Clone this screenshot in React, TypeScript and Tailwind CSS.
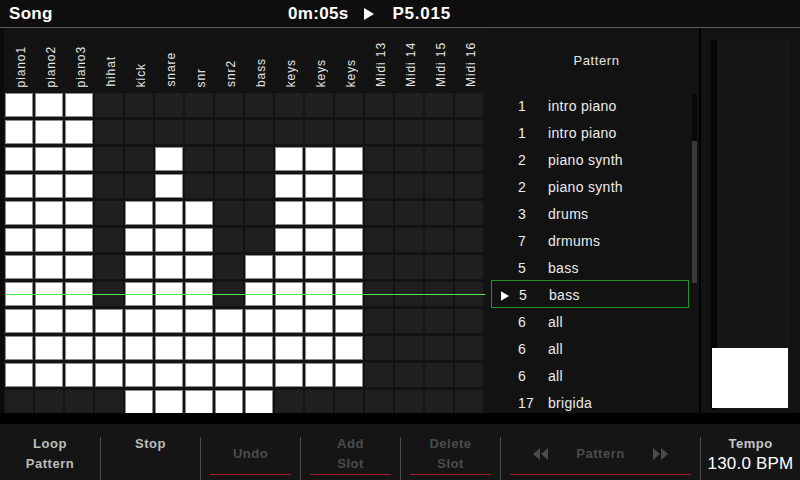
import React from 'react';

const COLUMNS = [
  'piano1', 'piano2', 'piano3', 'hihat', 'kick', 'snare', 'snr', 'snr2',
  'bass', 'keys', 'keys', 'keys', 'Midi 13', 'Midi 14', 'Midi 15', 'Midi 16',
];

// which cells are lit, per row
const ACTIVE: number[][] = [
  [0, 1, 2],
  [0, 1, 2],
  [0, 1, 2, 5, 9, 10, 11],
  [0, 1, 2, 5, 9, 10, 11],
  [0, 1, 2, 4, 5, 6, 9, 10, 11],
  [0, 1, 2, 4, 5, 6, 9, 10, 11],
  [0, 1, 2, 4, 5, 6, 8, 9, 10, 11],
  [0, 1, 2, 4, 5, 6, 8, 9, 10, 11],
  [0, 1, 2, 3, 4, 5, 6, 7, 8, 9, 10, 11],
  [0, 1, 2, 3, 4, 5, 6, 7, 8, 9, 10, 11],
  [0, 1, 2, 3, 4, 5, 6, 7, 8, 9, 10, 11],
  [4, 5, 6, 7, 8],
];

const PATTERNS: [string, string][] = [
  ['1', 'intro piano'],
  ['1', 'intro piano'],
  ['2', 'piano synth'],
  ['2', 'piano synth'],
  ['3', 'drums'],
  ['7', 'drmums'],
  ['5', 'bass'],
  ['5', 'bass'],
  ['6', 'all'],
  ['6', 'all'],
  ['6', 'all'],
  ['17', 'brigida'],
];

const SELECTED = 7;

function PlayIcon({ className }: { className?: string }) {
  return (
    <svg viewBox="0 0 10 12" className={className}>
      <path d="M0 0 L10 6 L0 12 Z" fill="currentColor" />
    </svg>
  );
}

function DoubleArrow({ flip }: { flip?: boolean }) {
  return (
    <svg viewBox="0 0 16 12" className={`w-[16px] h-[12px] ${flip ? 'rotate-180' : ''}`}>
      <path d="M0 6 L7 0 L7 12 Z M8 6 L15 0 L15 12 Z" fill="currentColor" />
    </svg>
  );
}

function Divider() {
  return <div className="w-px bg-[#4a4a4a] mt-[13px]" />;
}

function ActionButton({
  lines,
  enabled,
  underline,
  width,
}: {
  lines: string[];
  enabled?: boolean;
  underline?: boolean;
  width: string;
}) {
  return (
    <div className={`${width} flex flex-col pt-[10px]`}>
      <div
        className={`h-[40px] flex flex-col items-center justify-center text-[13px] font-bold tracking-[0.5px] leading-[20px] ${
          enabled ? 'text-[#bdbdbd]' : 'text-[#4c4c4c]'
        }`}
      >
        {lines.map((l) => (
          <span key={l}>{l}</span>
        ))}
      </div>
      {underline && <div className="mx-[9px] h-px bg-[#a11c28]" />}
    </div>
  );
}

export default function App() {
  return (
    <div
      className="w-[800px] h-[480px] overflow-hidden bg-[#121212] text-white flex flex-col"
      style={{ fontFamily: '"Liberation Sans", Arial, sans-serif' }}
    >
      {/* top bar */}
      <div className="h-[28px] shrink-0 bg-[#0e0e0e] border-b border-[#5c5c5c] flex items-center px-[9px] font-bold text-[17px] tracking-[0.3px]">
        <span className="w-[279px]">Song</span>
        <span>0m:05s</span>
        <PlayIcon className="w-[10px] h-[12px] ml-[16px] text-white" />
        <span className="ml-[18px] tracking-[0.8px]">P5.015</span>
      </div>

      {/* main */}
      <div className="h-[385px] shrink-0 flex overflow-hidden">
        {/* sequencer grid */}
        <div className="w-[490px] relative bg-[#131313] border-l-[4px] border-[#0b0b0b] pl-[1px] overflow-hidden">
          <div className="grid grid-cols-[repeat(16,28px)] gap-x-[2px] h-[65px]">
            {COLUMNS.map((c, i) => (
              <div key={i} className="flex items-end justify-center pb-[6px] pl-[4px]">
                <span className="[writing-mode:vertical-rl] rotate-180 text-[12px] tracking-[0.9px] text-[#e4e4e4] leading-none">
                  {c}
                </span>
              </div>
            ))}
          </div>
          <div className="grid grid-cols-[repeat(16,28px)] auto-rows-[24px] gap-x-[2px] gap-y-[3px]">
            {ACTIVE.map((row, r) =>
              COLUMNS.map((_, c) =>
                row.includes(c) ? (
                  <div key={`${r}-${c}`} className="bg-white border border-[#8a8a8a]" />
                ) : (
                  <div key={`${r}-${c}`} className="bg-[#1f1f1f]" />
                )
              )
            )}
          </div>
          <div className="absolute left-[1px] top-[266px] w-[480px] h-px bg-[#4ceb4c]" />
        </div>

        {/* pattern list */}
        <div className="w-[209px] flex bg-[#121212]">
          <div className="w-[202px] flex flex-col">
            <div className="h-[65px] shrink-0 flex items-center justify-center pl-[11px] text-[13px] tracking-[0.6px] text-[#e6e6e6]">
              Pattern
            </div>
            {PATTERNS.map(([n, name], i) =>
              i === SELECTED ? (
                <div
                  key={i}
                  className="h-[28px] shrink-0 w-[198px] ml-[1px] -mt-[2px] mb-[1px] pt-[3px] border border-[#24912a] flex items-center text-[14px] tracking-[0.3px] text-[#ececec]"
                >
                  <div className="w-[27px] pl-[9px] flex items-center">
                    <PlayIcon className="w-[8px] h-[10px] text-white" />
                  </div>
                  <span className="w-[30px]">{n}</span>
                  <span>{name}</span>
                </div>
              ) : (
                <div
                  key={i}
                  className="h-[27px] shrink-0 w-[198px] ml-[1px] flex items-center text-[14px] tracking-[0.3px] text-[#ececec]"
                >
                  <div className="w-[27px]" />
                  <span className="w-[30px]">{n}</span>
                  <span>{name}</span>
                </div>
              )
            )}
          </div>
          <div className="w-[5px] pt-[66px]">
            <div className="h-[189px] bg-[#080808] flex flex-col justify-end">
              <div className="h-[142px] bg-[#3a3a3a]" />
            </div>
          </div>
        </div>

        <div className="w-[2px] bg-black" />

        {/* level slider */}
        <div className="flex-1 bg-[#121212] pl-[10px] pt-[12px]">
          <div className="w-[79px] h-[370px] bg-[#161616] shadow-[inset_6px_0_0_#050505] flex flex-col justify-end pl-[1px] pr-[2px] pb-[2px]">
            <div className="h-[60px] bg-white" />
          </div>
        </div>
      </div>

      <div className="h-[11px] shrink-0 bg-black" />

      {/* bottom action bar */}
      <div className="flex-1 bg-[#151515] flex">
        <ActionButton width="w-[100px]" lines={['Loop', 'Pattern']} enabled />
        <Divider />
        <div className="w-[99px] flex flex-col pt-[10px]">
          <div className="h-[20px] flex items-center justify-center text-[13px] font-bold tracking-[0.5px] text-[#bdbdbd]">
            Stop
          </div>
        </div>
        <Divider />
        <ActionButton width="w-[99px]" lines={['Undo']} underline />
        <Divider />
        <ActionButton width="w-[99px]" lines={['Add', 'Slot']} underline />
        <Divider />
        <ActionButton width="w-[99px]" lines={['Delete', 'Slot']} underline />
        <Divider />
        <div className="w-[199px] flex flex-col pt-[10px]">
          <div className="h-[40px] flex items-center justify-between px-[32px] text-[#4c4c4c]">
            <DoubleArrow />
            <span className="text-[13px] font-bold tracking-[0.5px]">Pattern</span>
            <DoubleArrow flip />
          </div>
          <div className="mx-[9px] h-px bg-[#a11c28]" />
        </div>
        <Divider />
        <div className="flex-1 flex flex-col items-center pt-[10px]">
          <span className="h-[20px] leading-[20px] text-[13px] font-bold tracking-[0.5px] text-[#c8c8c8]">Tempo</span>
          <span className="h-[20px] leading-[20px] text-[17px] tracking-[0.2px] text-white">130.0 BPM</span>
        </div>
      </div>
    </div>
  );
}
